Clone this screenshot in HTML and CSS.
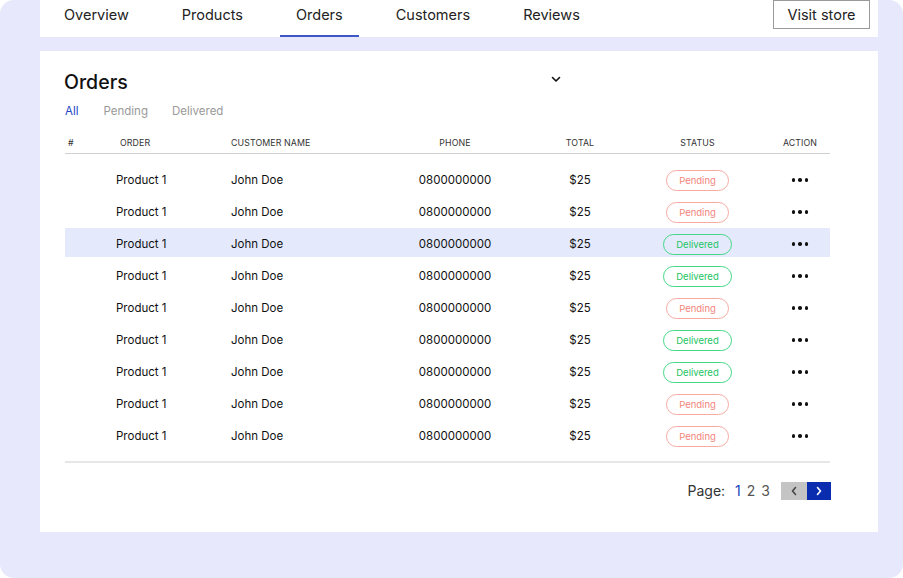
FILE: index.html
```html
<!DOCTYPE html>
<html lang="en">
<head>
<meta charset="utf-8">
<title>Orders</title>
<link rel="stylesheet" href="styles.css">
</head>
<body>
<div class="frame">
  <nav class="topnav">
    <div class="tabs">
      <a class="tab">Overview</a>
      <a class="tab">Products</a>
      <a class="tab active">Orders</a>
      <a class="tab">Customers</a>
      <a class="tab">Reviews</a>
    </div>
    <button class="visit">Visit store</button>
  </nav>

  <section class="card">
    <div class="card-head">
      <h1 class="title">Orders</h1>
      <svg class="chev" width="10" height="7" viewBox="0 0 10 7"><polyline points="1.5,1.5 5,5 8.5,1.5" fill="none" stroke="#111" stroke-width="1.6" stroke-linecap="round" stroke-linejoin="round"/></svg>
    </div>
    <div class="filters">
      <span class="filter on">All</span>
      <span class="filter">Pending</span>
      <span class="filter">Delivered</span>
    </div>

    <div class="table">
      <div class="row head">
        <div class="c-num">#</div>
        <div class="c-order">ORDER</div>
        <div class="c-cust">CUSTOMER NAME</div>
        <div class="c-phone">PHONE</div>
        <div class="c-total">TOTAL</div>
        <div class="c-status">STATUS</div>
        <div class="c-action">ACTION</div>
      </div>
      <div class="body">
        <div class="row"><div class="c-num"></div><div class="c-order">Product 1</div><div class="c-cust">John Doe</div><div class="c-phone">0800000000</div><div class="c-total">$25</div><div class="c-status"><span class="badge pending">Pending</span></div><div class="c-action"><span class="dots"><i></i><i></i><i></i></span></div></div>
        <div class="row"><div class="c-num"></div><div class="c-order">Product 1</div><div class="c-cust">John Doe</div><div class="c-phone">0800000000</div><div class="c-total">$25</div><div class="c-status"><span class="badge pending">Pending</span></div><div class="c-action"><span class="dots"><i></i><i></i><i></i></span></div></div>
        <div class="row hl"><div class="c-num"></div><div class="c-order">Product 1</div><div class="c-cust">John Doe</div><div class="c-phone">0800000000</div><div class="c-total">$25</div><div class="c-status"><span class="badge delivered">Delivered</span></div><div class="c-action"><span class="dots"><i></i><i></i><i></i></span></div></div>
        <div class="row"><div class="c-num"></div><div class="c-order">Product 1</div><div class="c-cust">John Doe</div><div class="c-phone">0800000000</div><div class="c-total">$25</div><div class="c-status"><span class="badge delivered">Delivered</span></div><div class="c-action"><span class="dots"><i></i><i></i><i></i></span></div></div>
        <div class="row"><div class="c-num"></div><div class="c-order">Product 1</div><div class="c-cust">John Doe</div><div class="c-phone">0800000000</div><div class="c-total">$25</div><div class="c-status"><span class="badge pending">Pending</span></div><div class="c-action"><span class="dots"><i></i><i></i><i></i></span></div></div>
        <div class="row"><div class="c-num"></div><div class="c-order">Product 1</div><div class="c-cust">John Doe</div><div class="c-phone">0800000000</div><div class="c-total">$25</div><div class="c-status"><span class="badge delivered">Delivered</span></div><div class="c-action"><span class="dots"><i></i><i></i><i></i></span></div></div>
        <div class="row"><div class="c-num"></div><div class="c-order">Product 1</div><div class="c-cust">John Doe</div><div class="c-phone">0800000000</div><div class="c-total">$25</div><div class="c-status"><span class="badge delivered">Delivered</span></div><div class="c-action"><span class="dots"><i></i><i></i><i></i></span></div></div>
        <div class="row"><div class="c-num"></div><div class="c-order">Product 1</div><div class="c-cust">John Doe</div><div class="c-phone">0800000000</div><div class="c-total">$25</div><div class="c-status"><span class="badge pending">Pending</span></div><div class="c-action"><span class="dots"><i></i><i></i><i></i></span></div></div>
        <div class="row"><div class="c-num"></div><div class="c-order">Product 1</div><div class="c-cust">John Doe</div><div class="c-phone">0800000000</div><div class="c-total">$25</div><div class="c-status"><span class="badge pending">Pending</span></div><div class="c-action"><span class="dots"><i></i><i></i><i></i></span></div></div>
      </div>
    </div>

    <div class="pager">
      <span class="pg-label">Page:</span>
      <span class="pg-num cur">1</span>
      <span class="pg-num">2</span>
      <span class="pg-num">3</span>
      <div class="pg-btns">
        <button class="pg-btn prev"><svg width="8" height="10" viewBox="0 0 8 10"><polyline points="5.5,1.5 2.5,5 5.5,8.5" fill="none" stroke="#444" stroke-width="1.6" stroke-linecap="round" stroke-linejoin="round"/></svg></button>
        <button class="pg-btn next"><svg width="8" height="10" viewBox="0 0 8 10"><polyline points="2.5,1.5 5.5,5 2.5,8.5" fill="none" stroke="#fff" stroke-width="1.6" stroke-linecap="round" stroke-linejoin="round"/></svg></button>
      </div>
    </div>
  </section>
</div>
</body>
</html>
```

FILE: styles.css
```css
* { box-sizing: border-box; }
html, body { margin: 0; padding: 0; background: #fff; }
body { font-family: "Inter", "Noto Sans", sans-serif; color: #111; }

.frame {
  width: 903px;
  height: 578px;
  background: #e8e8fc;
  border-radius: 14px;
  padding: 0 25px 0 40px;
  overflow: hidden;
}

.topnav {
  height: 37px;
  background: #fff;
  display: flex;
  justify-content: space-between;
  align-items: flex-start;
  padding-left: 8px;
  padding-right: 8px;
}
.tabs { display: flex; gap: 21px; height: 37px; }
.tab {
  display: block;
  height: 37px;
  padding: 6px 16px 0;
  font-size: 14.5px;
  line-height: 18px;
  color: #222;
  border-bottom: 2px solid transparent;
}
.tab.active { border-bottom-color: #3d57c4; }
.visit {
  width: 97px;
  height: 29px;
  background: #fff;
  border: 1px solid #9a9a9a;
  font-family: inherit;
  font-size: 14.5px;
  color: #222;
  padding: 0;
}

.card {
  margin-top: 14px;
  height: 481px;
  background: #fff;
  padding: 19px 48px 0 25px;
}
.card-head { display: flex; align-items: flex-start; }
.title {
  margin: 0 0 0 -1px;
  font-size: 19.5px;
  line-height: 24px;
  font-weight: 500;
  color: #111;
  width: 487px;
}
.chev { margin-top: 6px; }

.filters { display: flex; gap: 0; margin-top: 9px; height: 16px; }
.filter { font-size: 11.5px; line-height: 16px; color: #9a9a9a; margin-right: 24px; }
.filter.on { color: #2244c4; margin-right: 25px; }

.table { width: 765px; margin-top: 11px; }
.row {
  display: grid;
  grid-template-columns: 40px 120px 150px 160px 90px 145px 60px;
  align-items: center;
  height: 29px;
  font-size: 11.5px;
  padding-top: 3px;
}
.row.head {
  height: 24px;
  font-size: 8.8px;
  color: #333;
  border-bottom: 1px solid #cfcfcf;
  letter-spacing: 0.1px;
  padding-top: 2px;
}
.body { display: flex; flex-direction: column; gap: 3px; padding-top: 10px; padding-bottom: 12px; border-bottom: 2px solid #e6e6e6; }
.row.hl { background: #e4eafc; }

.c-num { padding-left: 3px; }
.c-order { padding-left: 11px; }
.head .c-order { padding-left: 15px; }
.c-cust { padding-left: 6px; }
.c-phone, .c-total, .c-status, .c-action { text-align: center; }
.c-status, .c-action { display: flex; justify-content: center; }

.badge {
  display: inline-block;
  height: 21px;
  line-height: 19px;
  border-radius: 11px;
  font-size: 9.5px;
  padding: 0 12px;
  border: 1px solid;
}
.badge.pending { color: #f2857b; border-color: #f6aaa2; }
.badge.delivered { color: #22c463; border-color: #44d786; }

.dots { display: flex; gap: 3px; }
.dots i { width: 3.5px; height: 3.5px; border-radius: 50%; background: #111; display: block; }

.pager {
  display: flex;
  justify-content: flex-end;
  align-items: center;
  width: 766px;
  margin-top: 18px;
  height: 19px;
}
.pg-label { font-size: 14px; color: #333; margin-right: 10px; }
.pg-num { font-size: 14px; color: #555; margin-right: 6px; }
.pg-num.cur { color: #1c3fb8; }
.pg-btns { display: flex; margin-left: 5px; }
.pg-btn {
  height: 18px;
  border: 0;
  padding: 0;
  display: flex;
  align-items: center;
  justify-content: center;
}
.pg-btn.prev { width: 26px; background: #c4c4c4; }
.pg-btn.next { width: 24px; background: #0a2db0; }
```
